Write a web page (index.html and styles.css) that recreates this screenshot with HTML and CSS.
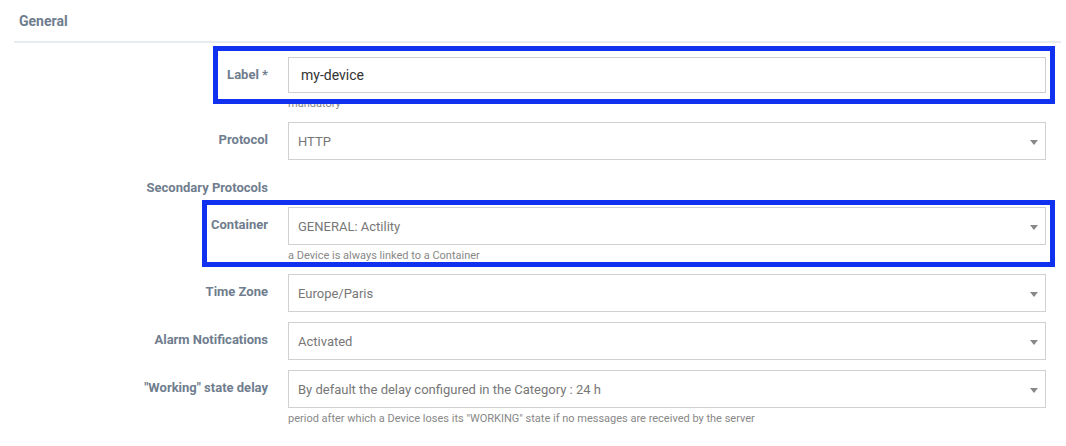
FILE: index.html
```html
<!DOCTYPE html>
<html>
<head>
<meta charset="utf-8">
<link rel="stylesheet" href="styles.css">
</head>
<body>
<div class="panel">
  <div class="panel-head">General</div>
  <div class="form">
    <div class="row">
      <div class="lbl">Label *</div>
      <div class="ctrl">
        <div class="input">my-device</div>
        <div class="help">mandatory</div>
      </div>
    </div>
    <div class="row">
      <div class="lbl">Protocol</div>
      <div class="ctrl">
        <div class="select">HTTP<span class="caret"></span></div>
      </div>
    </div>
    <div class="row row-plain">
      <div class="lbl">Secondary Protocols</div>
      <div class="ctrl"></div>
    </div>
    <div class="row">
      <div class="lbl">Container</div>
      <div class="ctrl">
        <div class="select">GENERAL: Actility<span class="caret"></span></div>
        <div class="help">a Device is always linked to a Container</div>
      </div>
    </div>
    <div class="row">
      <div class="lbl">Time Zone</div>
      <div class="ctrl">
        <div class="select">Europe/Paris<span class="caret"></span></div>
      </div>
    </div>
    <div class="row">
      <div class="lbl">Alarm Notifications</div>
      <div class="ctrl">
        <div class="select">Activated<span class="caret"></span></div>
      </div>
    </div>
    <div class="row">
      <div class="lbl">"Working" state delay</div>
      <div class="ctrl">
        <div class="select">By default the delay configured in the Category : 24 h<span class="caret"></span></div>
        <div class="help">period after which a Device loses its "WORKING" state if no messages are received by the server</div>
      </div>
    </div>
  </div>
  <div class="mark mark-label"></div>
  <div class="mark mark-container"></div>
</div>
</body>
</html>
```

FILE: styles.css
```css
html, body {
  margin: 0;
  padding: 0;
  background: #fff;
}
body {
  font-family: Roboto, "Liberation Sans", sans-serif;
  width: 1066px;
  height: 446px;
  overflow: hidden;
}
.panel {
  position: relative;
  padding: 0 5px 0 14px;
}
.panel-head {
  height: 41px;
  line-height: 42px;
  padding-left: 5px;
  font-size: 14px;
  font-weight: 700;
  color: #6f7d8e;
  border-bottom: 2px solid #e8ebef;
}
.form {
  padding: 14px 15px 0 0;
}
.row {
  display: flex;
  margin-bottom: 10px;
}
.row-plain {
  min-height: 27px;
}
.lbl {
  width: 254px;
  margin-right: 20px;
  padding-top: 10px;
  font-size: 13px;
  line-height: 16px;
  font-weight: 700;
  color: #6f7d8e;
  text-align: right;
  flex: none;
}
.ctrl {
  flex: 1;
  min-width: 0;
}
.input {
  box-sizing: border-box;
  height: 36px;
  border: 1px solid #cfcfcf;
  padding: 0 12px;
  line-height: 35px;
  font-size: 14px;
  color: #333;
}
.select {
  position: relative;
  box-sizing: border-box;
  height: 38px;
  border: 1px solid #d0d0d0;
  padding: 0 9px;
  line-height: 38px;
  font-size: 13px;
  color: #777;
}
.caret {
  position: absolute;
  right: 7px;
  top: 17px;
  width: 0;
  height: 0;
  border-left: 4px solid transparent;
  border-right: 4px solid transparent;
  border-top: 5px solid #888;
}
.help {
  margin-top: 4px;
  margin-bottom: 1px;
  font-size: 11px;
  line-height: 14px;
  color: #888;
}
.mark {
  position: absolute;
  box-sizing: border-box;
  border: 5px solid #1032f0;
}
.mark-label {
  left: 213px;
  top: 46px;
  width: 842px;
  height: 58px;
}
.mark-container {
  left: 202px;
  top: 200px;
  width: 853px;
  height: 67px;
}
```
